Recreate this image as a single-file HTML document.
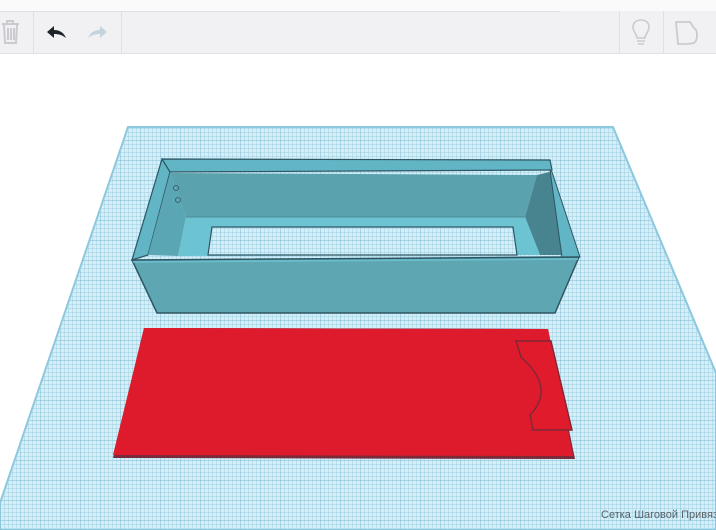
<!DOCTYPE html>
<html><head><meta charset="utf-8"><style>
html,body{margin:0;padding:0;width:716px;height:530px;overflow:hidden;background:#fff;font-family:"Liberation Sans","DejaVu Sans",sans-serif}
</style></head><body>
<svg width="716" height="530" viewBox="0 0 716 530" xmlns="http://www.w3.org/2000/svg" style="position:absolute;left:0;top:0">
<defs>
<pattern id="fine" width="4" height="4" patternUnits="userSpaceOnUse">
<rect width="4" height="4" fill="#d6eef7"/>
<path d="M0 0H4M0 0V4" stroke="#99d0e4" stroke-width="0.9"/>
</pattern>
<pattern id="major" width="20" height="20" patternUnits="userSpaceOnUse">
<rect width="20" height="20" fill="url(#fine)"/>
<path d="M0 0H20M0 0V20" stroke="#7bbcd6" stroke-width="1"/>
</pattern>
<clipPath id="gc"><polygon points="128,127 613,127 716,373 716,530 0,530 0,503"/></clipPath>
</defs>
<rect x="0" y="0" width="716" height="11" fill="#fafafa"/>
<rect x="0" y="11" width="716" height="42" fill="#f1f1f3"/>
<line x1="0" y1="11.5" x2="560" y2="11.5" stroke="#e0e0e3"/>
<line x1="0" y1="53.5" x2="716" y2="53.5" stroke="#e2e2e5"/>
<line x1="33.5" y1="11" x2="33.5" y2="53" stroke="#e0e0e3"/>
<line x1="121.5" y1="11" x2="121.5" y2="53" stroke="#e0e0e3"/>
<line x1="619.5" y1="11" x2="619.5" y2="53" stroke="#e0e0e3"/>
<line x1="663.5" y1="11" x2="663.5" y2="53" stroke="#e0e0e3"/>
<g fill="none" stroke="#c9cbd0" stroke-width="2">
<path d="M2 24H19M7 24V21H13V24M4 25L5 43H16L17 25M8 28V40M11 28V40M14 28V40"/>
</g>
<path d="M47 32L54 26V30C60 30 64 33 66 38C62 35 59 34 54 34V38Z" fill="#1d2428"/>
<path d="M107 32L100 26V30C94 30 90 33 88 38C92 35 95 34 100 34V38Z" fill="#c5d3de"/>
<g fill="none" stroke="#c9cbd0" stroke-width="1.6">
<path d="M637 38C637 34 633 32 633 27C633 22 637 20 641 20C645 20 649 22 649 27C649 32 645 34 645 38Z"/>
<path d="M637 41H645M638 44H644"/>
</g>
<path d="M676 22H690L694 28C698 30 698 40 694 43L688 44H678Z" fill="none" stroke="#c9cbd0" stroke-width="1.8"/>
<g clip-path="url(#gc)">
<rect x="0" y="127" width="716" height="403" fill="url(#major)"/>
</g>
<polygon points="128,127 613,127 716,373 716,530 0,530 0,503" fill="none" stroke="#8cc8de" stroke-width="2"/>
<polygon points="162,159 550,160 552,170 165,172" fill="#62b5c4" stroke="#2e5563" stroke-width="1.2"/>
<polygon points="162,159 170,172 148,255 132,260" fill="#62b5c4" stroke="#2e5563" stroke-width="1.2"/>
<polygon points="170,173 537,175 525,217 186,217" fill="#5aa2ae"/>
<polygon points="170,173 186,217 178,256 148,255" fill="#5aa6b4"/>
<polygon points="537,175 550,172 562,255 540,255 525,217" fill="#47848f"/>
<polygon points="550,170 552,172 580,257 562,257" fill="#62b5c4" stroke="#2e5563" stroke-width="1"/>
<polygon points="186,217 525,217 540,255 178,256" fill="#6cc3d2"/>
<polygon points="212,227 513,227 517,255 208,255" fill="url(#major)" stroke="#2e5563" stroke-width="1.2"/>
<line x1="186" y1="217" x2="525" y2="217" stroke="#4c8c98" stroke-width="1"/>
<circle cx="176" cy="188" r="2.5" fill="none" stroke="#2e5563" stroke-width="0.8"/>
<circle cx="178" cy="200" r="2.5" fill="none" stroke="#2e5563" stroke-width="0.8"/>
<polygon points="132,260 579,257 555,313 157,313" fill="#5fa6b3" stroke="#2e5563" stroke-width="1.5"/>
<line x1="133" y1="262" x2="578" y2="259" stroke="#6cc0ce" stroke-width="1.5"/>
<polygon points="144,328 548,329 575,459 113,458" fill="#7a2a38"/>
<polygon points="144,328 548,329 573,456 113,455" fill="#de1b2d"/>
<path d="M516,341 L551,341 L572,430 L533,430 L530,415 Q556,388 521,357 Z" fill="#df1b2c" stroke="#7e2836" stroke-width="1.4"/>
<text x="601" y="518" font-size="11" fill="#5a6066" font-family="Liberation Sans, DejaVu Sans, sans-serif">Сетка Шаговой Привязки</text>
</svg>
</body></html>
